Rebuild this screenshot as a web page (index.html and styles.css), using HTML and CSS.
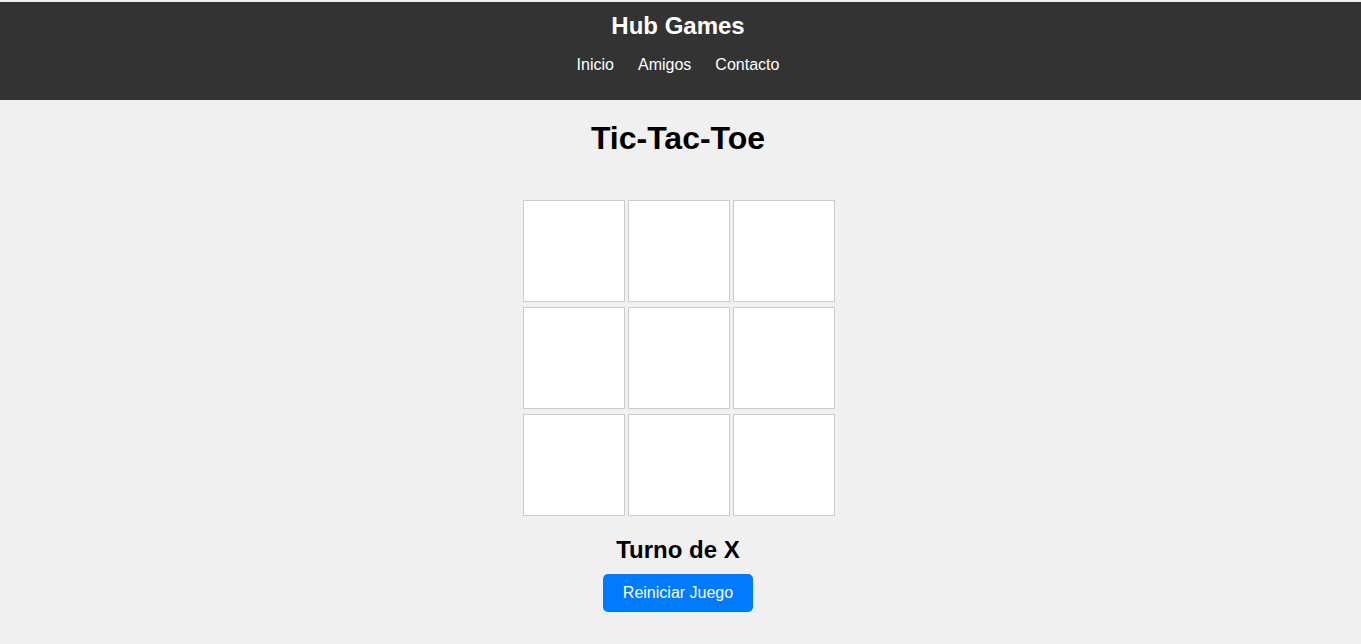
FILE: index.html
```html
<!DOCTYPE html>
<html lang="es">
<head>
<meta charset="utf-8">
<title>Hub Games - Tic-Tac-Toe</title>
<link rel="stylesheet" href="styles.css">
</head>
<body>
<header class="site-header">
  <h1 class="brand">Hub Games</h1>
  <nav>
    <ul class="nav-list">
      <li><a href="#">Inicio</a></li>
      <li><a href="#">Amigos</a></li>
      <li><a href="#">Contacto</a></li>
    </ul>
  </nav>
</header>
<main class="game">
  <h1 class="title">Tic-Tac-Toe</h1>
  <div class="board">
    <div class="cell"></div>
    <div class="cell"></div>
    <div class="cell"></div>
    <div class="cell"></div>
    <div class="cell"></div>
    <div class="cell"></div>
    <div class="cell"></div>
    <div class="cell"></div>
    <div class="cell"></div>
  </div>
  <h2 class="status">Turno de X</h2>
  <button class="reset">Reiniciar Juego</button>
</main>
</body>
</html>
```
FILE: styles.css
```css
html, body {
  margin: 0;
  padding: 0;
}
body {
  padding-top: 2px;
  background: #f0f0f0;
  font-family: "Liberation Sans", Arial, sans-serif;
  color: #000;
}
.site-header {
  background: #333;
  color: #fff;
  padding: 10px 5px 10px 0;
  text-align: center;
}
.brand {
  margin: 0;
  font-size: 24px;
  font-weight: bold;
}
.nav-list {
  list-style: none;
  margin: 16px 0 16px;
  padding: 0;
  display: flex;
  justify-content: center;
  gap: 24px;
}
.nav-list a {
  color: #fff;
  text-decoration: none;
  font-size: 16px;
}
.game {
  display: flex;
  flex-direction: column;
  align-items: center;
  padding-right: 3px;
}
.title {
  font-size: 32px;
  margin: 20px 2px 0 0;
}
.board {
  margin-top: 43px;
  display: grid;
  grid-template-columns: repeat(3, 102px);
  grid-auto-rows: 102px;
  column-gap: 3px;
  row-gap: 5px;
}
.cell {
  background: #fff;
  border: 1px solid #ccc;
}
.status {
  font-size: 24px;
  margin: 20px 2px 10px 0;
}
.reset {
  font-family: "Liberation Sans", Arial, sans-serif;
  font-size: 16px;
  color: #fff;
  background: #007bff;
  border: none;
  border-radius: 5px;
  padding: 10px 14px;
  width: 150px;
  margin-right: 2px;
  cursor: pointer;
}
```
